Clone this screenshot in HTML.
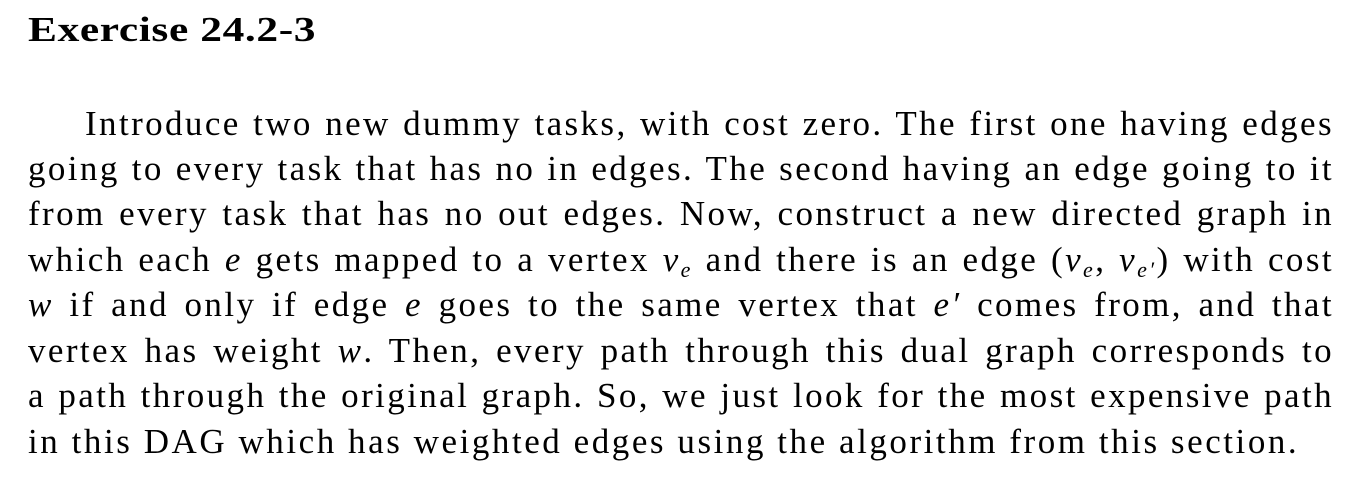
<!DOCTYPE html>
<html><head><meta charset="utf-8"><style>
body{margin:0;width:1361px;height:480px;background:#fff;overflow:hidden;font-family:"Liberation Serif",serif;color:#000}
.h{position:absolute;left:28px;top:12px;font-size:35px;line-height:35px;font-weight:bold;white-space:nowrap;transform:scaleX(1.24);transform-origin:0 0;letter-spacing:0.5px}
.l{position:absolute;left:28px;width:1306px;font-size:35px;line-height:45px;letter-spacing:2.4px;text-align:justify;text-align-last:justify;white-space:nowrap}
i{font-style:italic}
sub{font-size:22px;line-height:0;vertical-align:-6px}
</style></head><body>
<div class="h">Exercise 24.2-3</div>
<div class="l" style="top:101px;padding-left:57px;width:1249px">Introduce two new dummy tasks, with cost zero. The first one having edges</div>
<div class="l" style="top:146px">going to every task that has no in edges. The second having an edge going to it</div>
<div class="l" style="top:191px">from every task that has no out edges. Now, construct a new directed graph in</div>
<div class="l" style="top:237px">which each <i>e</i> gets mapped to a vertex <i>v</i><sub><i>e</i></sub> and there is an edge (<i>v</i><sub><i>e</i></sub>, <i>v</i><sub><i>e′</i></sub>) with cost</div>
<div class="l" style="top:282px"><i>w</i> if and only if edge <i>e</i> goes to the same vertex that <i>e′</i> comes from, and that</div>
<div class="l" style="top:328px">vertex has weight <i>w</i>. Then, every path through this dual graph corresponds to</div>
<div class="l" style="top:373px">a path through the original graph. So, we just look for the most expensive path</div>
<div class="l" style="top:419px;text-align-last:left;width:auto;letter-spacing:2.55px">in this DAG which has weighted edges using the algorithm from this section.</div>
</body></html>
